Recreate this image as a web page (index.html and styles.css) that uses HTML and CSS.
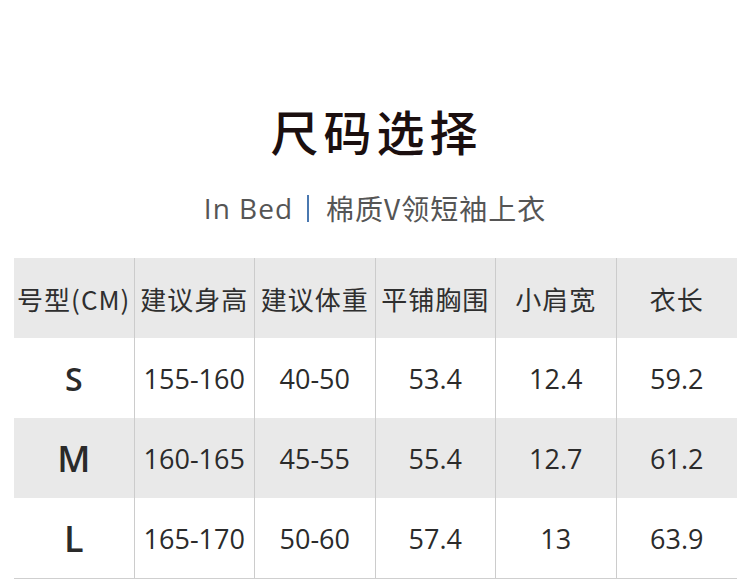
FILE: index.html
```html
<!DOCTYPE html>
<html lang="zh">
<head>
<meta charset="utf-8">
<link rel="stylesheet" href="styles.css">
</head>
<body>
<div class="page">
  <h1 class="title">尺码选择</h1>
  <p class="subtitle"><span class="latin">In Bed</span><span class="bar"></span><span class="cn">棉质V领短袖上衣</span></p>
  <div class="table">
    <div class="row head">
      <div class="cell">号型(CM)</div>
      <div class="cell">建议身高</div>
      <div class="cell">建议体重</div>
      <div class="cell">平铺胸围</div>
      <div class="cell">小肩宽</div>
      <div class="cell">衣长</div>
    </div>
    <div class="row">
      <div class="cell size small">S</div>
      <div class="cell num">155-160</div>
      <div class="cell num">40-50</div>
      <div class="cell num">53.4</div>
      <div class="cell num">12.4</div>
      <div class="cell num">59.2</div>
    </div>
    <div class="row shade">
      <div class="cell size">M</div>
      <div class="cell num">160-165</div>
      <div class="cell num">45-55</div>
      <div class="cell num">55.4</div>
      <div class="cell num">12.7</div>
      <div class="cell num">61.2</div>
    </div>
    <div class="row last">
      <div class="cell size">L</div>
      <div class="cell num">165-170</div>
      <div class="cell num">50-60</div>
      <div class="cell num">57.4</div>
      <div class="cell num">13</div>
      <div class="cell num">63.9</div>
    </div>
  </div>
</div>
</body>
</html>
```

FILE: styles.css
```css
html, body {
  margin: 0;
  padding: 0;
  background: #ffffff;
}

.page {
  width: 750px;
  padding-top: 100px;
  font-family: "Open Sans", "Noto Sans CJK SC", sans-serif;
}

.title {
  margin: 0;
  height: 60px;
  line-height: 60px;
  text-align: center;
  font-family: "Noto Sans CJK SC", sans-serif;
  font-size: 48px;
  font-weight: 500;
  letter-spacing: 5px;
  padding-left: 3px;
  color: #1b0f0f;
}

.subtitle {
  margin: 28px 0 0 0;
  height: 40px;
  display: flex;
  align-items: center;
  justify-content: center;
  color: #555555;
  font-size: 28px;
  line-height: 40px;
}

.subtitle .latin {
  font-family: "Open Sans", sans-serif;
  letter-spacing: 1px;
}

.subtitle .bar {
  display: inline-block;
  width: 2px;
  height: 27px;
  background: #4a78b0;
  margin: 0 17px 0 14px;
}

.subtitle .cn {
  font-family: "Noto Sans CJK SC", sans-serif;
  letter-spacing: 1px;
}

.table {
  margin: 30px 0 0 14px;
  width: 723px;
}

.row {
  display: grid;
  grid-template-columns: repeat(6, 1fr);
  height: 80px;
}

.row.head,
.row.shade {
  background: #e9e9e9;
}

.row.last {
  border-bottom: 1px solid #cfcfcf;
}

.cell {
  display: flex;
  align-items: center;
  justify-content: center;
  color: #2b2b2b;
  border-right: 1px solid #cccccc;
}

.cell:last-child {
  border-right: none;
}

.head .cell {
  font-family: "Noto Sans CJK SC", sans-serif;
  font-size: 26px;
  letter-spacing: 1px;
  color: #2f2f2f;
}

.num {
  font-family: "Open Sans", sans-serif;
  font-size: 27px;
}

.size {
  font-family: "Open Sans", sans-serif;
  font-size: 36px;
  font-weight: 600;
  color: #2a2a2a;
}

.size.small {
  font-size: 32px;
}
```
